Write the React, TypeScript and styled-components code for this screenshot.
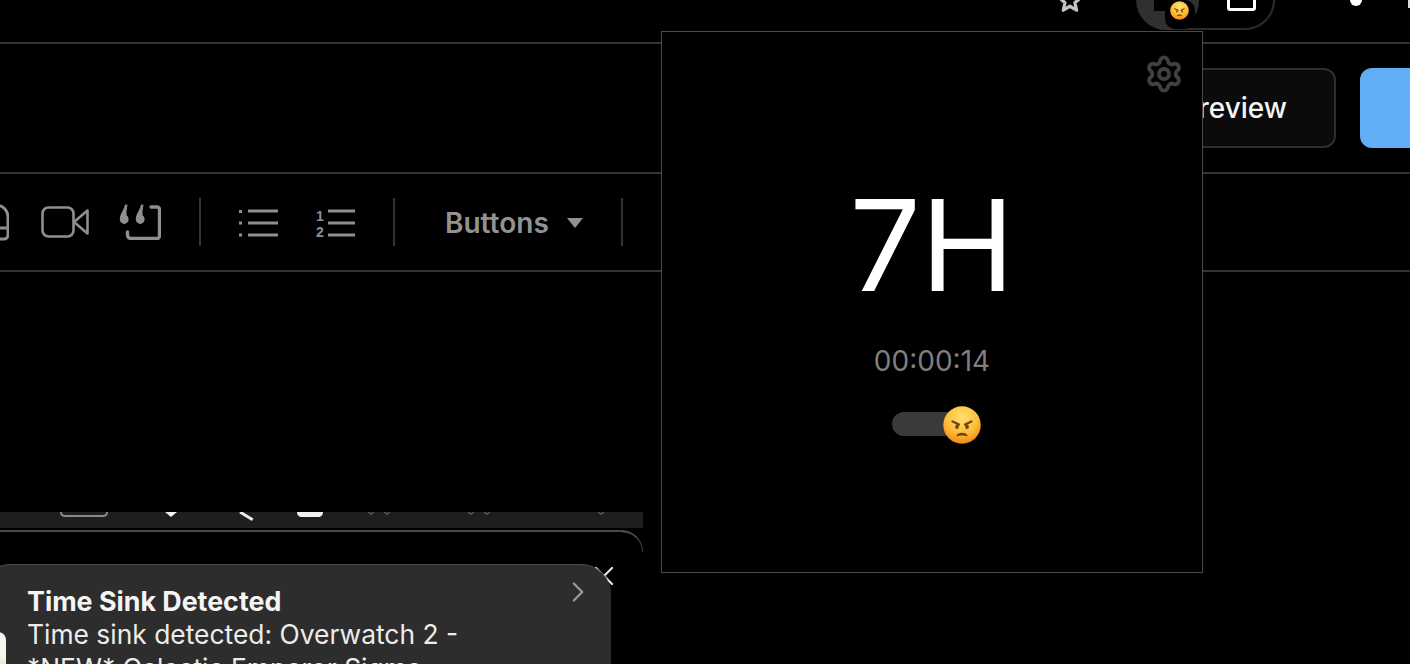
import styled, { createGlobalStyle } from 'styled-components';
import { Settings, ChevronRight, X } from 'lucide-react';

const GlobalStyle = createGlobalStyle`
    html,
    body {
        margin: 0;
        padding: 0;
        background: #000;
    }
    * {
        box-sizing: border-box;
    }
`;

const AngryEmoji = ({ size }: { size: number }) => (
    <svg width={size} height={size} viewBox="0 0 38 38">
        <defs>
            <radialGradient id="angryFace" cx="50%" cy="30%" r="75%">
                <stop offset="0%" stopColor="#ffe071" />
                <stop offset="58%" stopColor="#fdbd38" />
                <stop offset="100%" stopColor="#ec7f12" />
            </radialGradient>
        </defs>
        <circle cx="19" cy="19" r="18.7" fill="url(#angryFace)" />
        <path d="M9.500 15.500l6.500 3M28.500 15.500l-6.500 3" stroke="#75420e" strokeWidth="2.2" strokeLinecap="round" fill="none" />
        <ellipse cx="14" cy="20.800" rx="1.900" ry="2.300" fill="#75420e" />
        <ellipse cx="24" cy="20.800" rx="1.900" ry="2.300" fill="#75420e" />
        <path d="M14 29.800c1.500-3.200 8.500-3.200 10 0-2-1.200-8-1.200-10 0z" fill="#75420e" stroke="#75420e" strokeWidth="1.200" strokeLinejoin="round" />
    </svg>
);

const App = () => {
    return (
        <Page>
            <GlobalStyle />
            <TopBar>
                <BookmarkStar width="26" height="26" viewBox="0 0 24 24">
                    <path
                        d="M12 2.500l2.900 6.600 7.100.7-5.400 4.700 1.600 7-6.200-3.700-6.200 3.700 1.600-7L2 9.800l7.100-.7z"
                        fill="none"
                        stroke="#c4c4c4"
                        strokeWidth="3"
                        strokeLinejoin="round"
                    />
                </BookmarkStar>
                <ExtensionPill>
                    <ActiveExtension>
                        <ExtensionBlock />
                        <ExtensionBadge>
                            <AngryEmoji size={19} />
                        </ExtensionBadge>
                    </ActiveExtension>
                    <WindowIcon />
                </ExtensionPill>
                <MenuDot />
                <EdgeMark />
            </TopBar>

            <HeaderRow>
                <PreviewButton>Preview</PreviewButton>
                <PublishButton />
            </HeaderRow>

            <Toolbar>
                <svg width="30" height="40" viewBox="0 0 30 40" style={{ marginLeft: -21 }}>
                    <path
                        d="M2 16C2 8 8 3 16 3s13 5 13 13v17a4 4 0 0 1-4 4H6M2 26h27"
                        fill="none"
                        stroke="#8f8f8f"
                        strokeWidth="3"
                        strokeLinecap="round"
                    />
                </svg>
                <ToolIcon width="48" height="32" viewBox="0 0 48 32" $left={32}>
                    <rect x="1.500" y="1.500" width="31" height="29" rx="6" fill="none" stroke="#8f8f8f" strokeWidth="2.600" />
                    <path d="M33 16L46.500 4.500v23z" fill="none" stroke="#8f8f8f" strokeWidth="2.600" strokeLinejoin="round" />
                </ToolIcon>
                <ToolIcon width="42" height="36" viewBox="0 0 42 36" $left={30}>
                    <path d="M6 .5C5 6 .8 10 .8 15.500a4.400 4.400 0 1 0 8.800 0c0-2-1-3.500-2-4.200C7.300 8 7.800 4 8.600 .8z" fill="#8f8f8f" />
                    <path d="M22 .5C21 6 16.800 10 16.800 15.500a4.400 4.400 0 1 0 8.800 0c0-2-1-3.500-2-4.200C23.300 8 23.800 4 24.600 .8z" fill="#8f8f8f" />
                    <path d="M32 3H38a2.500 2.500 0 0 1 2.500 2.500v26.500a2.500 2.500 0 0 1-2.500 2.500H12a3.500 3.500 0 0 1-3.500-3.500v-3" fill="none" stroke="#8f8f8f" strokeWidth="3.400" strokeLinecap="round" />
                </ToolIcon>
                <Separator $left={38} />
                <ToolIcon width="39" height="30" viewBox="0 0 39 30" $left={38}>
                    <path d="M9 4h30M9 16h30M9 28h30" stroke="#8f8f8f" strokeWidth="2.800" fill="none" />
                    <path d="M0 3h3v3H0zM0 14.500h3v3H0zM0 26.500h3v3H0z" fill="#8f8f8f" />
                </ToolIcon>
                <ToolIcon width="39" height="40" viewBox="0 0 39 40" $left={38}>
                    <path d="M12 9h27M12 21h27M12 33h27" stroke="#8f8f8f" strokeWidth="2.800" fill="none" />
                    <text x="0" y="19" fontFamily="'Liberation Sans', sans-serif" fontWeight="700" fontSize="14" fill="#8f8f8f">1</text>
                    <text x="0" y="35" fontFamily="'Liberation Sans', sans-serif" fontWeight="700" fontSize="14" fill="#8f8f8f">2</text>
                </ToolIcon>
                <Separator $left={38} />
                <ButtonsMenu>
                    Buttons
                    <Caret />
                </ButtonsMenu>
                <Separator $left={38} />
            </Toolbar>

            <EditorArea />

            <PeekStrip>
                <svg width="643" height="16" viewBox="0 0 643 16">
                    <path d="M61 0c0 3 1 4 4 4h38c3 0 4-1 4-4" fill="none" stroke="#8a8a8a" strokeWidth="2" />
                    <path d="M165 0h12l-6 5z" fill="#f2f2f2" />
                    <path d="M240 0l14 5" stroke="#e8e8e8" strokeWidth="3" fill="none" transform="rotate(12 240 0)" />
                    <path d="M297 0h26c0 3-2 5-5 5h-16c-3 0-5-2-5-5z" fill="#f2f2f2" />
                    <path d="M368 0l3 2 3-2M384 0l3 2 3-2M468 0l3 2 3-2M484 0l3 2 3-2M598 0l3 2 3-2" fill="none" stroke="#555" strokeWidth="1.500" />
                </svg>
            </PeekStrip>

            <DownloadCard>
                <DismissIcon>
                    <X size={32} strokeWidth={1.6} color="#e6e6e6" />
                </DismissIcon>
                <Notification>
                    <AppIconEdge />
                    <NotificationTitle>Time Sink Detected</NotificationTitle>
                    <NotificationBody>Time sink detected: Overwatch 2 -</NotificationBody>
                    <NotificationBody>*NEW* Galactic Emperor Sigma</NotificationBody>
                    <NotificationChevron>
                        <ChevronRight size={34} strokeWidth={1.600} color="#9a9a9a" />
                    </NotificationChevron>
                </Notification>
            </DownloadCard>

            <Popup>
                <PopupHeader>
                    <Settings size={40} strokeWidth={2.300} color="#404040" />
                </PopupHeader>
                <Remaining>7H</Remaining>
                <Elapsed>00:00:14</Elapsed>
                <MoodTrack>
                    <MoodThumb>
                        <AngryEmoji size={38} />
                    </MoodThumb>
                </MoodTrack>
            </Popup>
        </Page>
    );
};

const Page = styled.div`
    position: relative;
    display: flex;
    flex-direction: column;
    width: 1410px;
    height: 664px;
    overflow: hidden;
    background: #000;
    font-family: Inter, 'Liberation Sans', sans-serif;
`;

const TopBar = styled.div`
    display: flex;
    align-items: flex-start;
    flex: 0 0 44px;
    border-bottom: 2px solid #333;
`;

const BookmarkStar = styled.svg`
    margin-left: 1057px;
    margin-top: -13px;
`;

const ExtensionPill = styled.div`
    display: flex;
    align-items: flex-start;
    width: 140px;
    height: 60px;
    margin-top: -30px;
    margin-left: 53px;
    border: 2px solid #2b2b2b;
    border-radius: 30px;
`;

const ActiveExtension = styled.div`
    position: relative;
    width: 62px;
    height: 58px;
    margin-left: -1px;
    background: #303030;
    border-radius: 30px;
`;

const ExtensionBlock = styled.div`
    position: absolute;
    top: 28px;
    left: 17px;
    width: 11px;
    height: 11px;
    background: #000;
`;

const ExtensionBadge = styled.div`
    position: absolute;
    top: 28px;
    left: 28px;
    display: flex;
    justify-content: center;
    padding-top: 1px;
    width: 30px;
    height: 29px;
    background: #000;
    border-radius: 0 10px 10px 10px;
`;

const WindowIcon = styled.div`
    width: 29px;
    height: 20px;
    margin-top: 19px;
    margin-left: 28px;
    border: 3px solid #fff;
    border-radius: 3px;
`;

const MenuDot = styled.div`
    width: 12px;
    height: 12px;
    margin-top: -6px;
    margin-left: 75px;
    background: #fff;
    border-radius: 50%;
`;

const EdgeMark = styled.div`
    width: 2px;
    height: 8px;
    margin-left: 46px;
    background: #d8d8d8;
`;

const HeaderRow = styled.div`
    display: flex;
    align-items: center;
    flex: 0 0 130px;
    padding-left: 1100px;
    gap: 24px;
    border-bottom: 2px solid #333;
`;

const PreviewButton = styled.div`
    display: flex;
    align-items: center;
    justify-content: flex-end;
    flex: 0 0 236px;
    height: 80px;
    padding-right: 47px;
    color: #f4f4f4;
    font-size: 28px;
    font-weight: 500;
    background: #0b0b0b;
    border: 2px solid #2e2e2e;
    border-radius: 12px;
`;

const PublishButton = styled.div`
    flex: 0 0 120px;
    height: 80px;
    background: #60aef5;
    border-radius: 12px;
`;

const Toolbar = styled.div`
    display: flex;
    align-items: center;
    flex: 0 0 98px;
    border-bottom: 2px solid #333;
`;

const ToolIcon = styled.svg<{ $left: number }>`
    flex: none;
    margin-left: ${({ $left }) => $left}px;
`;

const Separator = styled.div<{ $left: number }>`
    flex: none;
    width: 2px;
    height: 48px;
    margin-left: ${({ $left }) => $left}px;
    background: #333;
`;

const ButtonsMenu = styled.div`
    display: flex;
    align-items: center;
    gap: 18px;
    margin-left: 50px;
    padding-top: 1px;
    color: #929292;
    font-size: 28px;
    font-weight: 600;
`;

const Caret = styled.span`
    width: 0;
    height: 0;
    border-left: 8px solid transparent;
    border-right: 8px solid transparent;
    border-top: 10px solid #929292;
`;

const EditorArea = styled.div`
    flex: 0 0 240px;
`;

const PeekStrip = styled.div`
    flex: 0 0 16px;
    width: 643px;
    line-height: 0;
    background: #1e1e1e;
`;

const DownloadCard = styled.div`
    position: relative;
    flex: 1;
    width: 643px;
    margin-top: 2px;
    background: #000;
    border-top: 2px solid #4a4a4a;
    border-radius: 0 22px 0 0;

    &::after {
        content: '';
        position: absolute;
        top: -2px;
        right: 0;
        width: 24px;
        height: 20px;
        border-top: 2px solid #4a4a4a;
        border-right: 1px solid #3a3a3a;
        border-radius: 0 22px 0 0;
    }
`;

const DismissIcon = styled.div`
    position: absolute;
    top: 28px;
    left: 588px;
    line-height: 0;
`;

const Notification = styled.div`
    position: absolute;
    top: 32px;
    left: -20px;
    width: 631px;
    height: 140px;
    padding: 20px 0 0 47px;
    background: #2d2d2d;
    border-top: 1px solid #4c4c4c;
    border-radius: 30px;
    z-index: 1;
`;

const NotificationTitle = styled.div`
    color: #f5f5f5;
    font-size: 26.800px;
    font-weight: 700;
    line-height: 32px;
`;

const NotificationBody = styled.div`
    color: #ececec;
    font-size: 26.400px;
    line-height: 34px;
`;

const NotificationChevron = styled.div`
    position: absolute;
    top: 10px;
    left: 581px;
    line-height: 0;
`;

const AppIconEdge = styled.div`
    position: absolute;
    top: 67px;
    left: 0;
    width: 26px;
    height: 60px;
    background: linear-gradient(180deg, #f8f6f0 0%, #f8f6f0 40%, #f0b060 100%);
    border-radius: 8px;
`;

const Popup = styled.div`
    position: absolute;
    top: 31px;
    left: 661px;
    display: flex;
    flex-direction: column;
    align-items: center;
    width: 542px;
    height: 542px;
    padding-top: 22px;
    background: #000;
    border: 1px solid #4a4a4a;
    z-index: 2;
`;

const PopupHeader = styled.div`
    display: flex;
    justify-content: flex-end;
    align-self: stretch;
    padding-right: 18px;
    line-height: 0;
`;

const Remaining = styled.div`
    margin-top: 75px;
    color: #fff;
    font-size: 126px;
    font-weight: 400;
    line-height: 152px;
`;

const Elapsed = styled.div`
    margin-top: 23px;
    color: #7f7f7f;
    font-size: 28px;
    line-height: 34px;
`;

const MoodTrack = styled.div`
    position: relative;
    width: 80px;
    height: 24px;
    margin-top: 34px;
    background: #3a3a3a;
    border-radius: 12px;
`;

const MoodThumb = styled.div`
    position: absolute;
    top: -6px;
    left: 51px;
    line-height: 0;
`;

export default App;
